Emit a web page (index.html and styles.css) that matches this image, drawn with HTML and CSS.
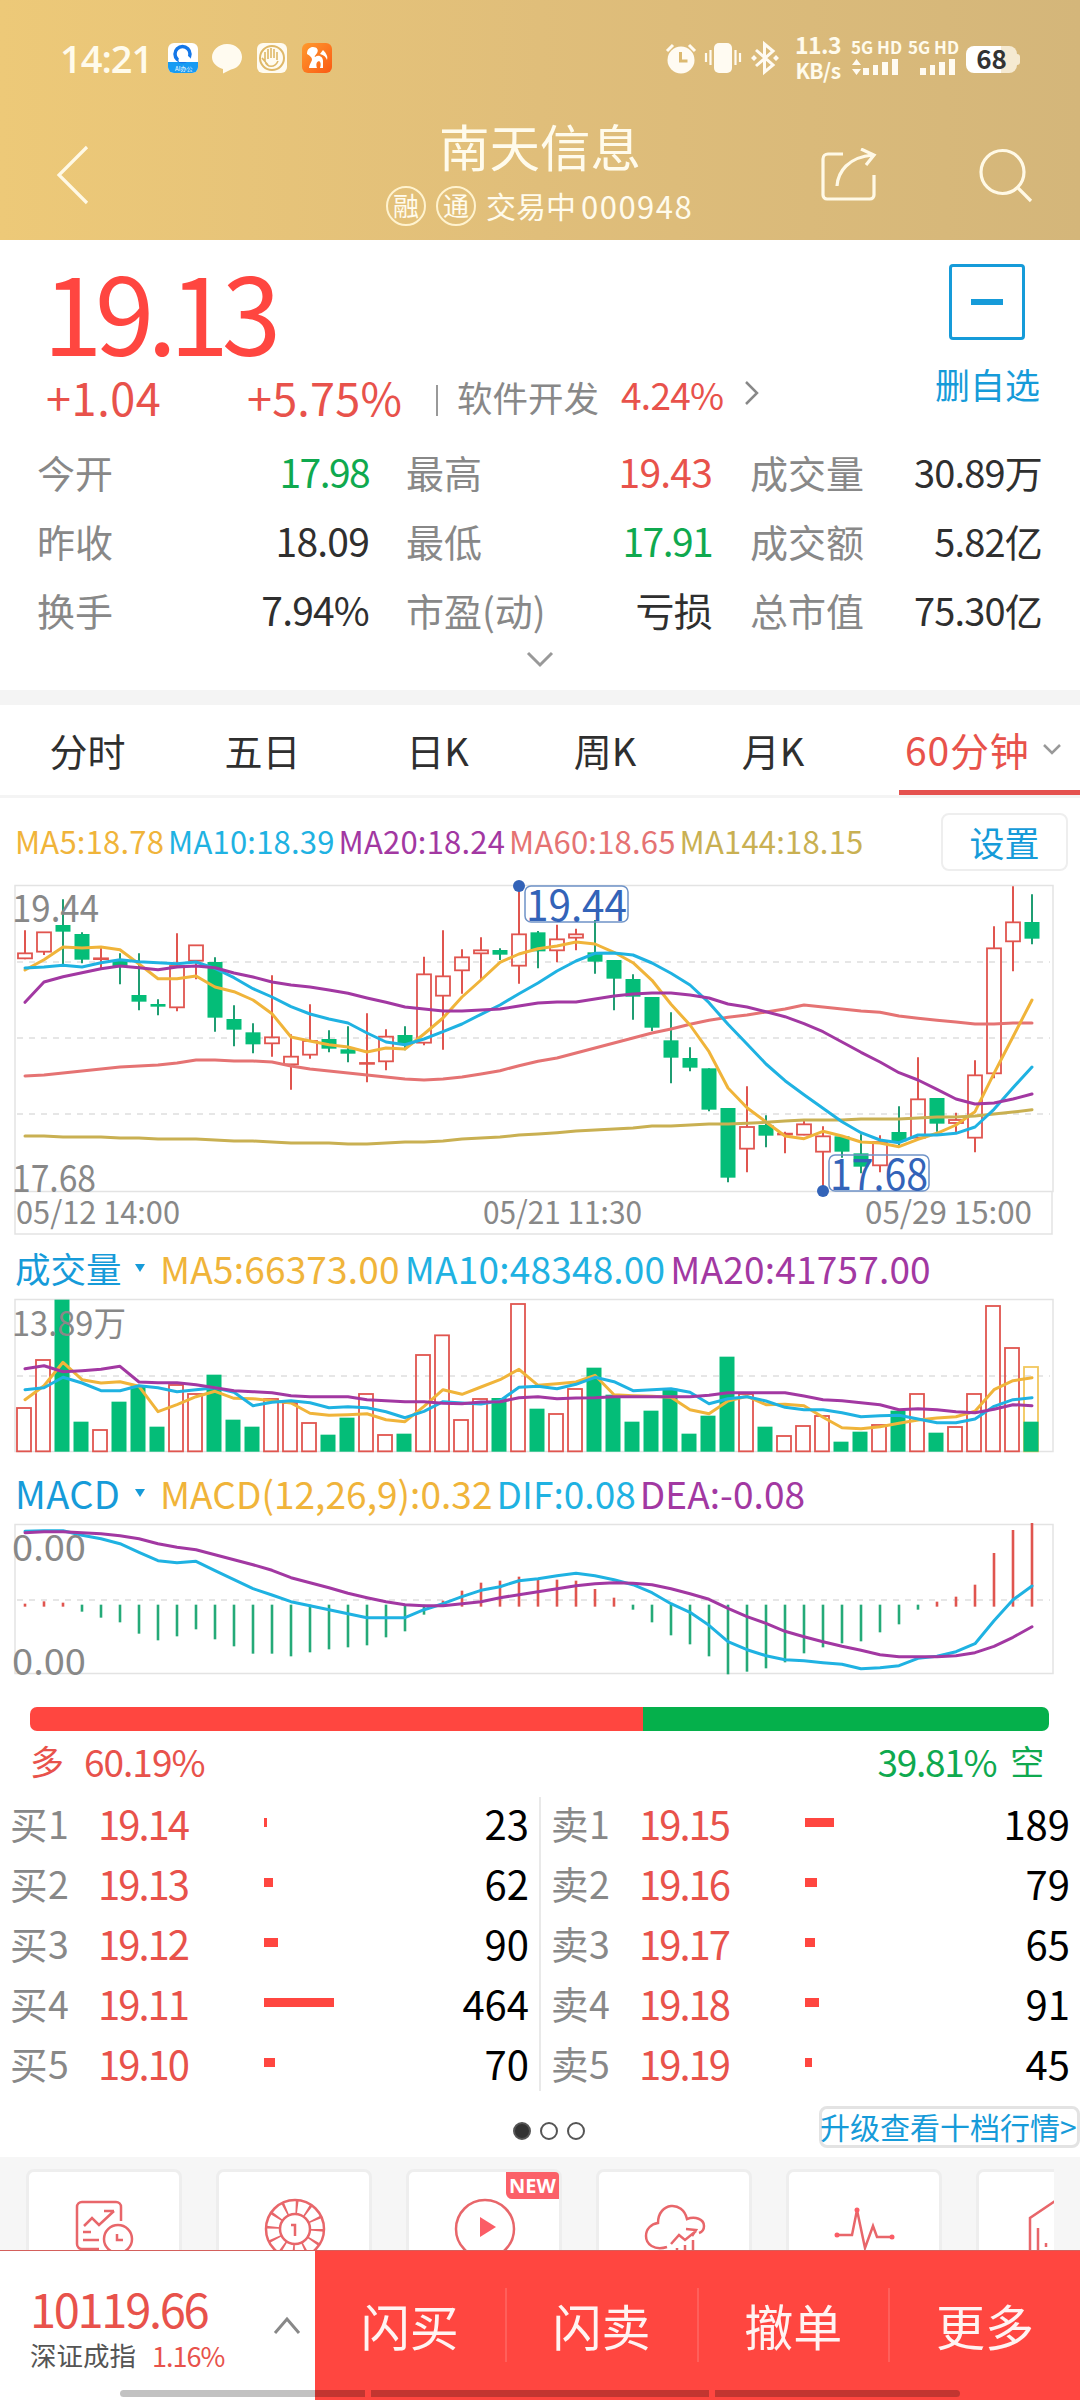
FILE: index.html
```html
<!DOCTYPE html>
<html lang="zh-CN">
<head>
    <meta charset="UTF-8">
    <meta name="viewport" content="width=device-width, initial-scale=1.0">
    <title>南天信息 000948</title>
    <link rel="stylesheet" href="styles.css">
</head>
<body>
    <header>
        <div class="status">
            <span class="clock">14:21</span>
            <svg class="apps" width="176" height="32" viewBox="0 0 176 32">
                <defs>
                    <linearGradient id="orange" x1="0" y1="0" x2="1" y2="1">
                        <stop offset="0" stop-color="#ff9a2e"/>
                        <stop offset="1" stop-color="#fa5a14"/>
                    </linearGradient>
                </defs>
                <rect x="1" y="1" width="30" height="30" rx="6" fill="#fff"/>
                <path d="M1 20h30v5a6 6 0 0 1-6 6H7a6 6 0 0 1-6-6z" fill="#179bf3"/>
                <circle cx="15.500" cy="12" r="7.500" fill="#fff" stroke="#1477e8" stroke-width="3.500"/>
                <path d="M12 20a4 4 0 0 1 3-6a4 4 0 0 1 7 1a3 3 0 0 1 1 5z" fill="#fff"/>
                <text x="8" y="29" class="app-text">AI办公</text>
                <path d="M60 2c9 0 15 6 15 13s-6 12-11 12.500l-8 4v-4.500c-6-2-11-6-11-12S51 2 60 2z" fill="#fffbf0"/>
                <rect x="90" y="1" width="30" height="30" rx="6" fill="#fffbf0"/>
                <circle cx="105" cy="16" r="12" fill="none" stroke="#dfb868" stroke-width="2"/>
                <path d="M98 19l-3-3M98 19v-9M101 17V7M104 16V6M107 16V7M110 18v-8M98 19c2 7 10 7 13 0M95 16l6 7" fill="none" stroke="#dfb868" stroke-width="1.600"/>
                <rect x="135" y="1" width="30" height="30" rx="6" fill="url(#orange)"/>
                <path d="M140 12c0-5 3-7 6-7c4 0 6 3 4 6c-1 2-3 3-2 4c4-3 8 0 8 4v7h-3c1-3 1-6-1-7c-3 1-3 4-2 7h-8c0-3 2-5 3-8c0-3-2-4-5-6zM153 12l3-4c4 4 5 7 4 10c-1-3-3-5-7-6z" fill="#fff"/>
            </svg>
            <svg class="signals" width="134" height="36" viewBox="0 0 134 36">
                <g fill="#fffbf2">
                    <circle cx="21" cy="20" r="13.500"/>
                    <path d="M7 11l6-6M29 5l6 6" stroke="#fffbf2" stroke-width="3"/>
                    <rect x="54" y="3" width="18" height="30" rx="5"/>
                    <path d="M50.500 10v15M46 13v9M75.500 10v15M80 13v9" stroke="#fffbf2" stroke-width="2.200"/>
                    <path d="M96 10l17 15-8.500 7V4l8.500 7-17 15" fill="none" stroke="#fffbf2" stroke-width="3"/>
                    <path d="M94 15l3 3-3 3-3-3zM116 15l3 3-3 3-3-3z"/>
                </g>
                <path d="M20.500 12v9h7" fill="none" stroke="#dcb970" stroke-width="3"/>
            </svg>
            <div class="speed"><span>11.3</span><span>KB/s</span></div>
            <div class="net">
                <span>5G HD</span>
                <svg width="48" height="18" viewBox="0 0 48 18">
                    <path d="M5.500 1l4.500 6H1zM5.500 17l4.500-6H1z"/>
                    <path d="M12 10h6v7h-6zM22 7h5v10h-5zM31 4h6v13h-6zM41 1h6v16h-6z"/>
                </svg>
            </div>
            <div class="net">
                <span>5G HD</span>
                <svg width="48" height="18" viewBox="0 0 48 18">
                    <path d="M12 10h6v7h-6zM22 7h5v10h-5zM31 4h6v13h-6zM41 1h6v16h-6z"/>
                </svg>
            </div>
            <div class="battery">68</div>
        </div>
        <nav>
            <svg class="back" width="34" height="62" viewBox="0 0 34 62"><path d="M31 3L3 31l28 28"/></svg>
            <div class="title">
                <h1>南天信息</h1>
                <p><i>融</i><i>通</i><span class="state">交易中</span><span class="code">000948</span></p>
            </div>
            <svg class="share" width="60" height="56" viewBox="0 0 60 56">
                <path d="M23 6H8a5 5 0 0 0-5 5v36a4 4 0 0 0 4 4h43a4 4 0 0 0 4-4V27M17 38C18 24 28 9 53 7M41 1l13 6-8 10"/>
            </svg>
            <svg class="search" width="56" height="56" viewBox="0 0 56 56">
                <circle cx="24.500" cy="25" r="21.500"/><path d="M39 40l14 14"/>
            </svg>
        </nav>
    </header>

    <section class="quote">
        <div class="quote-top">
            <div>
                <div class="price">19.13</div>
                <div class="change">
                    <span class="diff">+1.04</span>
                    <span class="percent">+5.75%</span>
                    <span class="sep"></span>
                    <span class="sector">软件开发</span>
                    <span class="sector-change">4.24%</span>
                    <svg width="16" height="26" viewBox="0 0 16 26"><path d="M2 2l11 11L2 24"/></svg>
                </div>
            </div>
            <div class="favorite">
                <div class="minus"></div>
                <span>删自选</span>
            </div>
        </div>
        <div class="stats">
            <span>今开</span><b class="down">17.98</b><span>最高</span><b class="up">19.43</b><span>成交量</span><b class="small">30.89万</b>
            <span>昨收</span><b>18.09</b><span>最低</span><b class="down">17.91</b><span>成交额</span><b class="small">5.82亿</b>
            <span>换手</span><b>7.94%</b><span>市盈(动)</span><b>亏损</b><span>总市值</span><b class="small">75.30亿</b>
        </div>
        <svg class="expand" width="28" height="17" viewBox="0 0 28 17"><path d="M2 2l12 12L26 2"/></svg>
    </section>

    <div class="tabs">
        <span>分时</span><span>五日</span><span>日K</span><span>周K</span><span>月K</span>
        <span class="active">60分钟<svg width="20" height="12" viewBox="0 0 20 12"><path d="M2 2l8 8 8-8"/></svg></span>
    </div>

    <section class="charts">
        <div class="legend ma">
            <span class="c1">MA5:18.78</span><span class="c2">MA10:18.39</span><span class="c3">MA20:18.24</span><span class="c4">MA60:18.65</span><span class="c5">MA144:18.15</span>
            <button>设置</button>
        </div>
        <svg id="kline" width="1080" height="364"></svg>
        <div class="legend vol">
            <a>成交量</a><i></i>
            <span class="c1">MA5:66373.00</span><span class="c2">MA10:48348.00</span><span class="c3">MA20:41757.00</span>
        </div>
        <svg id="volume" width="1080" height="156"></svg>
        <div class="legend macd">
            <a>MACD</a><i></i>
            <span class="c1">MACD(12,26,9):0.32</span><span class="c2">DIF:0.08</span><span class="c3">DEA:-0.08</span>
        </div>
        <svg id="macd" width="1080" height="156"></svg>
    </section>

    <section class="book">
        <div class="ratio"><div class="bull"></div><div class="bear"></div></div>
        <div class="ratio-text">
            <span class="bull-text"><em>多</em>60.19%</span>
            <span class="bear-text">39.81%<em>空</em></span>
        </div>
        <div class="orders">
            <div id="buy"></div>
            <div id="sell"></div>
        </div>
        <div class="pager">
            <div class="dots"><i class="on"></i><i></i><i></i></div>
            <a>升级查看十档行情&gt;</a>
        </div>
    </section>

    <section class="tools">
        <div class="card">
            <svg width="64" height="64" viewBox="0 0 64 64"><path d="M26 52H9a5 5 0 0 1-5-5V10a5 5 0 0 1 5-5h34a5 5 0 0 1 5 5v14M11 29l8-8 7 7 15-14M31 14h10M10 35h8M10 43h16M44 37v6h6"/><circle cx="45" cy="42" r="14"/></svg>
        </div>
        <div class="card">
            <svg width="64" height="64" viewBox="0 0 64 64">
                <circle cx="32" cy="32" r="29"/><circle cx="32" cy="32" r="15"/>
                <circle class="chip" cx="32" cy="32" r="22"/>
                <path d="M28 28h4v11"/>
            </svg>
        </div>
        <div class="card">
            <b class="new">NEW</b>
            <svg width="64" height="64" viewBox="0 0 64 64"><circle cx="32" cy="32" r="29"/><path class="fill" d="M27 20l16 10-16 10z"/></svg>
        </div>
        <div class="card">
            <svg width="64" height="64" viewBox="0 0 64 64"><path d="M24 50C11 54 3 47 3 39c0-7 5-12 12-13C15 5 40 3 44 22c8-3 17 0 17 7 0 4-2 6-5 7M28 47l8-9 6 5 11-9M43 32l10 1-4 6M34 51v13M42 48v16M50 43v21"/></svg>
        </div>
        <div class="card">
            <svg width="64" height="64" viewBox="0 0 64 64"><path d="M5 38h14l5-25 8 38 8-22 4 11h16"/><circle class="fill" cx="4" cy="38" r="2.500"/><circle class="fill" cx="24" cy="13" r="2.500"/><circle class="fill" cx="59" cy="40" r="2.500"/></svg>
        </div>
        <div class="card">
            <svg width="64" height="64" viewBox="0 0 64 64"><path d="M7 64V21L32 4l25 17v43M15 31v33M23 46v4"/></svg>
        </div>
    </section>

    <footer>
        <div class="index">
            <div>
                <strong>10119.66</strong>
                <p>深证成指<span>1.16%</span></p>
            </div>
            <svg width="28" height="19" viewBox="0 0 28 19"><path d="M2 17L14 3l12 14"/></svg>
        </div>
        <a>闪买</a><a>闪卖</a><a>撤单</a><a>更多</a>
        <div class="home"><i></i><i></i><i></i></div>
    </footer>
    <script src="chart.js"></script>
</body>
</html>
```
FILE: styles.css
```css
:root {
    --red: #e8524b;
    --strong-red: #ff4640;
    --green: #0fa94f;
    --blue: #169bd9;
    --gray: #888;
    --text: #2f2f2f;
}
* {
    box-sizing: border-box;
}
body {
    margin: 0;
    width: 1080px;
    height: 2400px;
    overflow: hidden;
    position: relative;
    background: #fff;
    color: var(--text);
    font-family: "Noto Sans CJK SC", sans-serif;
    line-height: 1;
}
svg {
    display: block;
    flex: none;
}
i, em {
    font-style: normal;
}
h1, p {
    margin: 0;
    font-weight: normal;
}

/* header */
header {
    height: 240px;
    background: linear-gradient(90deg, #edc978, #e0be7a 50%, #d4b67a);
    color: #fffbec;
}
.status {
    display: flex;
    align-items: center;
    height: 116px;
    padding: 0 60px;
}
.clock {
    width: 107px;
    font-family: "Open Sans", sans-serif;
    font-size: 38px;
    letter-spacing: -1px;
    font-weight: 600;
}
.app-text {
    font-size: 6px;
    fill: #fff;
}
.signals {
    margin-left: 317px;
}
.speed {
    width: 48px;
    font-size: 23px;
    font-weight: bold;
    margin-right: 9px;
}
.speed span {
    display: block;
    height: 26px;
    line-height: 24px;
    text-align: center;
    white-space: nowrap;
    letter-spacing: -0.500px;
}
.speed span:last-child {
    font-size: 21px;
}
.net {
    width: 48px;
    margin-right: 9px;
}
.net span {
    display: block;
    font-size: 17px;
    line-height: 14px;
    font-weight: bold;
    white-space: nowrap;
    margin-bottom: 4px;
}
.net svg {
    fill: #fffbf2;
}
.battery {
    width: 51px;
    height: 27px;
    line-height: 24px;
    border-radius: 8px;
    background: linear-gradient(90deg, #fff 68%, #f5ead2 68%);
    color: #333;
    font-size: 26px;
    font-weight: bold;
    text-align: center;
    flex: none;
    position: relative;
    left: 1px;
    top: 1px;
}
.battery::after {
    content: "";
    position: absolute;
    right: -3px;
    top: 8px;
    width: 3px;
    height: 11px;
    background: #f5ead2;
    border-radius: 0 3px 3px 0;
}
nav {
    display: flex;
    height: 124px;
    padding-left: 56px;
}
nav svg {
    fill: none;
    stroke: #fff9e6;
    stroke-width: 3.200;
}
.back {
    margin-top: 28px;
}
.title {
    width: 310px;
    margin-left: 296px;
    text-align: center;
}
.title h1 {
    font-size: 50.500px;
    line-height: 58px;
    text-align: left;
    padding-left: 53px;
}
.title p {
    display: flex;
    align-items: center;
    height: 40px;
    margin-top: 12px;
    font-size: 30px;
}
.title i {
    width: 40px;
    height: 40px;
    margin-right: 10px;
    border: 2px solid #fff3cf;
    border-radius: 50%;
    font-size: 26px;
    line-height: 33px;
}
.title p span {
    margin-top: -2px;
}
.state {
    margin-right: 5px;
}
.code {
    letter-spacing: 1.500px;
    font-size: 31px;
}
.share {
    margin: 32px 0 0 124px;
}
.search {
    margin: 31px 0 0 98px;
}

/* quote */
.quote {
    height: 465px;
    border-bottom: 15px solid #f4f4f4;
}
.quote-top {
    display: flex;
    justify-content: space-between;
    height: 197px;
}
.price {
    padding: 15px 0 0 43px;
    font-size: 107px;
    line-height: 110px;
    letter-spacing: -7.300px;
    color: var(--strong-red);
    height: 129px;
}
.change {
    display: flex;
    align-items: center;
    height: 55px;
    padding-left: 46px;
    color: var(--red);
}
.diff {
    width: 201px;
    font-size: 45px;
    letter-spacing: 0.600px;
}
.percent {
    width: 189px;
    font-size: 45px;
    letter-spacing: 0.200px;
}
.sep {
    width: 2px;
    height: 31px;
    margin: 8px 19px 0 0;
    background: #999;
}
.sector {
    width: 164px;
    font-size: 35.500px;
    color: var(--gray);
}
.sector-change {
    width: 123px;
    font-size: 37px;
    letter-spacing: -0.700px;
    margin-top: -4px;
}
.change svg {
    fill: none;
    stroke: var(--gray);
    stroke-width: 2.500;
    margin-top: -7px;
}
.favorite {
    width: 106px;
    margin: 24px 39px 0 0;
    color: var(--blue);
    font-size: 35px;
}
.favorite span {
    white-space: nowrap;
}
.minus {
    display: flex;
    align-items: center;
    justify-content: center;
    width: 76px;
    height: 76px;
    margin: 0 0 26px 14px;
    border: 3px solid var(--blue);
    border-radius: 4px;
}
.minus::after {
    content: "";
    width: 32px;
    height: 6px;
    background: var(--blue);
}
.stats {
    display: grid;
    grid-template-columns: 134px 198px 200px 143px 170px 160px;
    grid-auto-rows: 69px;
    align-items: center;
    padding-left: 37px;
}
.stats span {
    font-size: 38px;
    color: var(--gray);
    white-space: nowrap;
}
.stats span:nth-child(6n + 3) {
    margin-left: 37px;
}
.stats span:nth-child(6n + 5) {
    margin-left: 38px;
}
.stats b {
    font-weight: normal;
    font-size: 39px;
    letter-spacing: -0.800px;
    text-align: right;
    white-space: nowrap;
}
.stats .small {
    font-size: 38px;
}
.up {
    color: var(--red);
}
.stats .down {
    letter-spacing: -1.600px;
}
.down {
    color: var(--green);
}
.expand {
    margin: 7px auto 0;
    fill: none;
    stroke: #999;
    stroke-width: 3;
}

/* tabs */
.tabs {
    display: grid;
    grid-template-columns: 175px 175px 175px 160px 176px 219px;
    height: 93px;
    border-bottom: 3px solid #f4f4f4;
    font-size: 38px;
    line-height: 89px;
    text-align: center;
}
.tabs .active {
    display: flex;
    align-items: center;
    height: 90px;
    margin-left: 38px;
    padding: 3px 0 0 6px;
    font-size: 39px;
    letter-spacing: 0.800px;
    color: var(--red);
    border-bottom: 5px solid #e5524f;
}
.tabs svg {
    margin: 0 0 0 12px;
    fill: none;
    stroke: #999;
    stroke-width: 2.500;
}

/* charts */
.legend {
    display: flex;
    align-items: center;
    white-space: nowrap;
}
.c1 { color: #f0b43a; }
.c2 { color: #1fb2e2; }
.c3 { color: #a238a2; }
.c4 { color: #e57373; }
.c5 { color: #c9b052; }
.ma {
    height: 87px;
    padding: 0 12px 0 15px;
    font-size: 31px;
    letter-spacing: 0.200px;
}
.ma span {
    margin: -2px 4px 0 0;
}
.ma button {
    width: 127px;
    height: 58px;
    margin-left: auto;
    border: 2px solid #eee;
    border-radius: 8px;
    background: #fff;
    padding: 0;
    color: var(--blue);
    font: 35px "Noto Sans CJK SC", sans-serif;
    line-height: 52px;
}
.vol, .macd {
    height: 38px;
    margin-bottom: 12px;
    padding-left: 15px;
    font-size: 37px;
    line-height: 34px;
}
.vol span {
    margin-right: 5px;
    letter-spacing: 0.200px;
}
.macd {
    margin: 19px 0 12px;
}
.macd span {
    margin-right: 4px;
    letter-spacing: 0.050px;
}
.legend a {
    width: 117px;
    font-size: 35.500px;
    line-height: 38px;
    color: var(--blue);
}
.macd a {
    font-size: 38px;
    letter-spacing: 0.300px;
}
.legend i {
    width: 10px;
    margin: 0 15px 0 3px;
    border: 5px solid transparent;
    border-top: 8px solid var(--blue);
    border-bottom: 0;
}
.charts svg {
    overflow: visible;
}
.frame {
    fill: none;
    stroke: #e3e3e3;
    stroke-width: 1.500;
}
.dash {
    stroke: #dedede;
    stroke-width: 1.500;
    stroke-dasharray: 6 6;
}
.line {
    fill: none;
    stroke-width: 3;
    stroke-linejoin: round;
    stroke-linecap: round;
}
.axis {
    fill: var(--gray);
}
.mark {
    fill: #3363b8;
}
.mark-box {
    fill: none;
    stroke: #6f93c8;
    stroke-width: 1.500;
}

/* order book */
.book {
    height: 477px;
    padding-top: 27px;
}
.ratio {
    display: flex;
    height: 24px;
    margin: 0 31px 0 30px;
    border-radius: 7px;
    overflow: hidden;
}
.bull {
    width: 60.190%;
    background: var(--strong-red);
}
.bear {
    flex: 1;
    background: #05b04b;
}
.ratio-text {
    display: flex;
    justify-content: space-between;
    align-items: center;
    height: 60px;
    padding: 0 37px 0 30px;
    font-size: 37px;
    letter-spacing: -1px;
}
.ratio-text span {
    display: flex;
    align-items: center;
}
.ratio-text em {
    font-size: 34px;
}
.bull-text {
    color: var(--red);
}
.bull-text em {
    margin-right: 21px;
}
.bear-text {
    color: var(--green);
    letter-spacing: -1.300px;
}
.bear-text em {
    margin-left: 14px;
}
.orders {
    display: flex;
    margin-top: 6px;
    height: 294px;
}
.orders > div {
    flex: 1;
}
#buy {
    border-right: 2px solid #e9e9e9;
}
.row {
    display: grid;
    grid-template-columns: 90px 164px 110px 1fr;
    align-items: center;
    height: 60px;
    padding: 0 10px;
    font-size: 40px;
    position: relative;
    top: -4px;
}
.row span {
    font-size: 37.500px;
    letter-spacing: 0.500px;
    color: var(--gray);
}
.row b {
    margin-left: -2px;
    font-weight: normal;
    letter-spacing: -2px;
    color: var(--red);
}
.row .bar {
    height: 9px;
    margin-top: -1px;
    background: var(--strong-red);
}
.row em {
    color: #000;
    text-align: right;
}
.pager {
    display: flex;
    align-items: center;
    height: 42px;
    margin-top: 15px;
}
.dots {
    display: flex;
    gap: 9px;
    width: 306px;
    margin: 8px 0 0 513px;
}
.dots i {
    width: 18px;
    height: 18px;
    border: 2px solid #555;
    border-radius: 50%;
}
.dots .on {
    background: #333;
}
.pager a {
    width: 261px;
    height: 42px;
    border: 3px solid #e3e3e3;
    border-radius: 8px;
    color: var(--blue);
    font-size: 30px;
    line-height: 35px;
    text-indent: -2px;
    white-space: nowrap;
}

/* tool cards */
.tools {
    display: flex;
    gap: 34px;
    height: 93px;
    padding: 12px 0 0 26px;
    margin-right: 26px;
    overflow: hidden;
    background: #f6f6f6;
    box-shadow: 26px 0 0 #f6f6f6;
}
.card {
    flex: none;
    position: relative;
    width: 156px;
    height: 120px;
    padding: 25px 0 0 44px;
    border: 3px solid #eee;
    border-radius: 8px;
    background: #fff;
}
.card svg {
    fill: none;
    stroke: #e8666a;
    stroke-width: 2.500;
}
.card .chip {
    stroke-width: 14;
    stroke-dasharray: 2.200 9.319;
}
.card .fill {
    fill: #fb5d66;
    stroke: none;
}
.new {
    position: absolute;
    top: 0;
    right: 0;
    width: 53px;
    height: 27px;
    border-radius: 0 4px 0 6px;
    background: #fb6068;
    color: #fff;
    font: bold 20px "Open Sans", sans-serif;
    line-height: 27px;
    text-align: center;
}

/* bottom bar */
footer {
    display: flex;
    position: relative;
    height: 150px;
    border-top: 1px solid #d4605c;
    background: var(--strong-red);
}
.index {
    display: flex;
    justify-content: space-between;
    width: 315px;
    padding: 33px 14px 0 30px;
    background: #fff;
}
.index strong {
    display: block;
    font-weight: normal;
    font-size: 47px;
    letter-spacing: -2.300px;
    color: var(--red);
}
.index p {
    display: flex;
    align-items: center;
    margin-top: 11px;
    font-size: 26.500px;
    color: #555;
    white-space: nowrap;
}
.index p span {
    margin-left: 16px;
    font-size: 27px;
    letter-spacing: -1px;
    color: var(--red);
}
.index svg {
    margin-top: 32px;
    fill: none;
    stroke: #888;
    stroke-width: 3;
}
footer a {
    flex: 1;
    height: 74px;
    margin-top: 37px;
    color: #fff3f2;
    font-size: 49px;
    line-height: 73px;
    text-align: center;
}
footer a + a {
    border-left: 2px solid #ff5f5a;
}
.home {
    position: absolute;
    left: 120px;
    bottom: 3px;
    width: 840px;
    display: flex;
    gap: 6px;
}
.home i {
    flex: 246 0 0;
    height: 7px;
    background: rgba(0, 0, 0, 0.24);
}
.home i:first-child {
    border-radius: 4px 0 0 4px;
}
.home i:nth-child(2) {
    flex-grow: 338;
}
.home i:last-child {
    border-radius: 0 4px 4px 0;
}
```
FILE: chart.js
```js
const RED = '#e0554f', GREEN = '#04bd78', WICK = '#1f9d72';
const YELLOW = '#f0b43a', BLUE = '#1fb2e2', PURPLE = '#a238a2', PINK = '#e57373', OLIVE = '#c9b052';

// all y values in the tables are in thirds of a pixel
const x = i => 25 + 19 * i;

// [direction, high, open/close top, open/close bottom, low]
const candles = [
    ['r',211,280,295,298],['r',217,217,275,285],['g',118,195,215,315],['g',217,222,299,310],['r',258,295,296,325],['g',280,300,318,373],
    ['g',280,405,425,451],['g',418,432,440,466],['r',220,318,442,454],['r',256,256,302,358],['g',292,306,473,515],['g',436,477,509,559],
    ['g',490,517,553,580],['r',346,532,550,590],['r',523,590,613,689],['r',433,543,584,596],['g',511,537,566,577],['g',499,568,581,607],
    ['r',460,609,610,667],['r',508,530,604,631],['g',499,525,555,571],['r',290,343,548,556],['r',211,349,407,569],['r',268,292,331,401],
    ['r',232,271,280,360],['g',265,270,284,300],['r',80,223,317,371],['g',213,217,274,325],['r',194,238,271,307],['r',206,223,233,271],
    ['g',180,277,305,341],['g',300,300,356,451],['g',343,357,410,479],['g',411,411,503,513],['g',457,541,593,670],['g',562,594,623,634],
    ['g',625,625,749,754],['g',744,744,953,967],['r',679,801,866,937],['g',766,795,827,862],['r',815,821,823,880],['r',782,793,824,826],
    ['r',799,829,875,980],['g',829,829,875,893],['g',823,880,920,940],['r',826,846,916,937],['g',739,816,844,856],['r',592,718,833,840],
    ['g',714,714,791,815],['r',758,780,789,820],['r',601,646,833,877],['r',199,265,640,655],['r',79,187,244,334],['g',103,186,236,253]
];
const kLines = [
    [PINK, [648,645,639,633,627,621,618,615,609,600,600,603,603,606,618,627,633,639,645,651,657,660,657,651,642,632,617,604,594,579,564,549,534,519,507,493,481,472,465,456,447,435,441,447,453,457,468,475,481,486,492,492,489,489]],
    [YELLOW, [330,299,261,264,261,269,312,356,356,348,381,395,420,461,531,543,554,561,576,564,567,522,474,411,360,307,282,266,258,246,252,277,308,361,433,495,575,684,743,786,828,836,814,828,846,849,860,838,820,795,755,640,530,420]],
    [OLIVE, [828,828,831,831,831,834,834,837,837,837,840,843,843,846,849,849,849,852,852,849,846,846,843,837,834,831,825,822,818,813,810,807,804,798,798,795,792,792,790,787,783,780,780,780,777,777,777,774,771,771,768,762,756,749]],
    [BLUE, [324,321,316,321,308,299,305,308,311,306,325,353,386,411,440,462,477,489,519,546,554,537,515,492,463,435,401,369,333,303,280,279,285,309,340,375,428,493,552,612,662,704,745,785,818,840,848,825,825,820,801,748,683,621]],
    [PURPLE, [427,366,350,338,326,318,323,329,321,318,323,339,351,366,375,381,390,400,414,427,441,447,453,453,450,447,438,429,426,426,417,408,402,399,399,405,414,432,441,455,470,491,515,546,577,606,638,660,688,717,732,729,717,702]]
];

const volumes = [505,361,180,546,571,486,440,561,436,463,405,540,561,478,490,550,585,534,463,586,582,346,287,541,478,475,193,507,523,448,384,465,546,513,447,582,528,351,463,561,589,559,529,606,576,556,513,463,579,562,463,199,325,546];
const vLines = [
    [YELLOW, [480,438,368,420,430,426,440,516,495,471,455,476,477,483,490,521,527,525,522,540,546,500,450,464,442,420,389,437,432,427,407,465,468,470,473,510,522,484,470,495,494,498,533,564,567,561,551,541,535,531,515,450,423,414]],
    [BLUE, [450,444,413,430,453,453,438,444,456,450,444,458,498,488,483,489,504,501,504,516,534,515,486,490,493,483,443,440,447,434,413,426,453,450,447,458,492,477,471,484,503,510,510,519,531,528,527,538,549,549,538,500,480,474]],
    [PURPLE, [387,378,396,393,389,380,427,429,429,435,444,453,456,459,468,471,471,471,480,483,486,486,491,492,487,486,474,471,477,475,474,471,471,471,471,471,467,459,459,459,459,469,480,483,489,495,510,507,510,516,519,509,495,498]]
];

const sticks = [1092,1085,1089,1116,1134,1148,1182,1202,1190,1169,1199,1220,1242,1242,1250,1238,1229,1223,1217,1193,1175,1125,1083,1053,1029,1023,1011,1020,1020,1023,1048,1074,1110,1148,1187,1214,1250,1304,1296,1286,1268,1241,1223,1211,1205,1178,1154,1110,1086,1071,1035,940,871,850];
const mLines = [
    [BLUE, [875,873,873,887,897,912,938,963,969,965,993,1020,1047,1066,1086,1098,1110,1122,1134,1134,1134,1110,1092,1071,1052,1041,1023,1017,1008,1001,1008,1020,1035,1059,1092,1118,1157,1206,1230,1248,1260,1263,1269,1274,1287,1284,1278,1256,1250,1236,1212,1143,1080,1039]],
    [PURPLE, [879,876,876,879,882,888,897,912,923,930,945,960,975,992,1014,1029,1044,1061,1074,1086,1095,1098,1098,1092,1086,1074,1065,1056,1047,1038,1032,1029,1031,1035,1047,1062,1079,1106,1131,1151,1175,1191,1206,1220,1232,1245,1251,1251,1251,1248,1239,1220,1193,1161]]
];

const frame = (top, bottom) => `<rect class="frame" x="15" y="${top}" width="1038" height="${bottom - top}"/>`;
const dash = y => `<line class="dash" x1="17" x2="1050" y1="${y}" y2="${y}"/>`;
const text = (cls, tx, ty, size, w, s) => `<text class="${cls}" x="${tx}" y="${ty}" font-size="${size}" textLength="${w}" lengthAdjust="spacingAndGlyphs">${s}</text>`;
const drawLines = (lines, y) => lines.map(([color, v]) =>
    `<polyline class="line" stroke="${color}" points="${v.map((p, i) => x(i) + ',' + y(p).toFixed(1)).join(' ')}"/>`).join('');

function drawKline() {
    const y = v => (v - 75) / 3;
    let s = frame(0.5, 306.5) + `<path class="frame" d="M15 306v43h1037v-43"/>` + dash(77) + dash(153) + dash(229);
    candles.forEach(([dir, high, top, bottom, low], i) => {
        const h = Math.max(y(bottom) - y(top), 0.8);
        if (dir === 'g') {
            s += `<path d="M${x(i)} ${y(high)}V${y(low)}" stroke="${WICK}" stroke-width="2"/>
                <rect x="${x(i) - 7.5}" y="${y(top)}" width="15" height="${h}" fill="${GREEN}"/>`;
        } else {
            s += `<path d="M${x(i)} ${y(high)}V${y(top)}M${x(i)} ${y(bottom)}V${y(low)}" stroke="${RED}" stroke-width="2"/>
                <rect x="${x(i) - 7}" y="${y(top)}" width="14" height="${h}" fill="none" stroke="${RED}" stroke-width="1.8"/>`;
        }
    });
    s += drawLines(kLines, y);
    s += text('axis', 12, 37, 37, 87, '19.44') + text('axis', 12, 307, 37, 84, '17.68');
    s += text('axis', 16, 339, 31, 164, '05/12 14:00') + text('axis', 483, 339, 31, 159, '05/21 11:30') + text('axis', 865, 339, 31, 167, '05/29 15:00');
    s += `<circle class="mark" cx="519" cy="1" r="6"/><circle class="mark" cx="823" cy="306" r="6"/>
        <rect class="mark-box" x="525" y="1" width="103" height="36" rx="6"/>
        <rect class="mark-box" x="829" y="270" width="100" height="36" rx="6"/>`;
    s += text('mark', 526, 36, 42, 101, '19.44') + text('mark', 830, 305, 42, 98, '17.68');
    document.getElementById('kline').innerHTML = s;
}

function drawVolume() {
    const y = v => (v - 178) / 3;
    let s = frame(0.5, 152.5) + dash(77);
    s += `<rect x="${x(53) - 8}" y="${y(382)}" width="14" height="${y(635) - y(382)}" fill="none" stroke="#f2c75c" stroke-width="1.8"/>`;
    volumes.forEach((v, i) => {
        if (candles[i][0] === 'g') {
            s += `<rect x="${x(i) - 8.5}" y="${y(v)}" width="15" height="${y(636) - y(v)}" fill="${GREEN}"/>`;
        } else {
            s += `<rect x="${x(i) - 8}" y="${y(v)}" width="14" height="${y(635) - y(v)}" fill="none" stroke="${RED}" stroke-width="1.8"/>`;
        }
    });
    s += drawLines(vLines, y) + text('axis', 12, 37, 34, 114, '13.89万');
    document.getElementById('volume').innerHTML = s;
}

function drawMacd() {
    const y = v => (v - 853) / 3;
    let s = frame(0.5, 149.5) + dash(76);
    sticks.forEach((v, i) => {
        const up = v < 1098;
        s += `<path d="M${x(i)} ${y(up ? 1101 : 1095)}V${y(v)}" stroke="${up ? RED : '#25aa78'}" stroke-width="2.6"/>`;
    });
    s += drawLines(mLines, y) + text('axis', 12, 37, 36, 74, '0.00') + text('axis', 12, 151, 36, 74, '0.00');
    document.getElementById('macd').innerHTML = s;
}

function drawOrders(id, label, rows) {
    document.getElementById(id).innerHTML = rows.map(([price, count], i) =>
        `<div class="row"><span>${label}${i + 1}</span><b>${price}</b><div class="bar" style="width: ${Math.round(count * 0.151)}px"></div><em>${count}</em></div>`).join('');
}

drawKline();
drawVolume();
drawMacd();
drawOrders('buy', '买', [['19.14', 23], ['19.13', 62], ['19.12', 90], ['19.11', 464], ['19.10', 70]]);
drawOrders('sell', '卖', [['19.15', 189], ['19.16', 79], ['19.17', 65], ['19.18', 91], ['19.19', 45]]);
```
